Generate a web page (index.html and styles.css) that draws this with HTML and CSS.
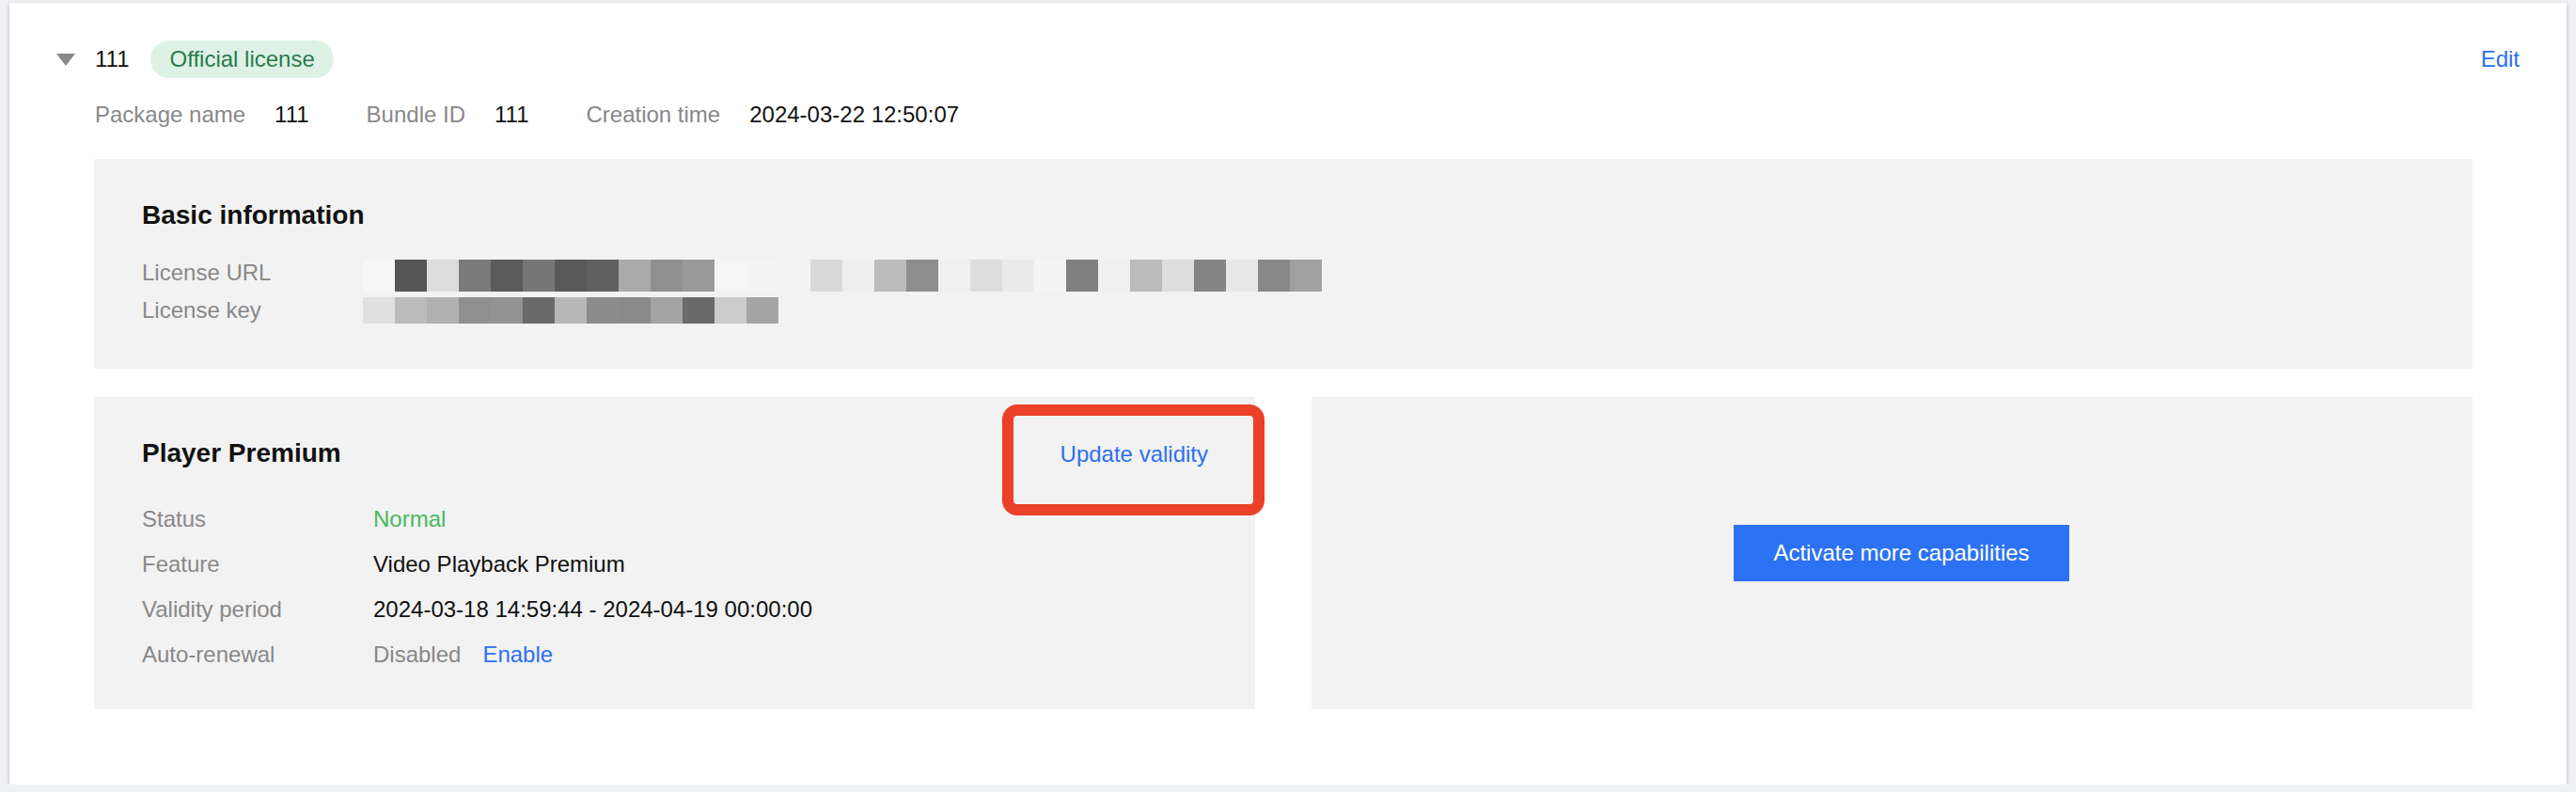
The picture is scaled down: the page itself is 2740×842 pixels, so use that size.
FILE: index.html
```html
<!DOCTYPE html>
<html lang="en">
<head>
    <meta charset="UTF-8">
    <title>License details</title>
    <link rel="stylesheet" href="styles.css">
</head>
<body>
    <div class="card">
        <div class="card-head">
            <div class="title-row">
                <svg class="caret" width="20" height="13" viewBox="0 0 20 13"><polygon points="0,0 20,0 10,13" fill="#888"/></svg>
                <span class="name">111</span>
                <span class="tag">Official license</span>
            </div>
            <a class="link">Edit</a>
        </div>

        <div class="meta">
            <span class="meta-item"><span class="label">Package name</span>111</span>
            <span class="meta-item"><span class="label">Bundle ID</span>111</span>
            <span class="meta-item"><span class="label">Creation time</span>2024-03-22 12:50:07</span>
        </div>

        <div class="content">
            <div class="section basic">
                <h2>Basic information</h2>
                <div class="kv">
                    <span class="label">License URL</span>
                    <div class="mosaic url"></div>
                    <span class="label">License key</span>
                    <div class="mosaic key"></div>
                </div>
            </div>

            <div class="columns">
                <div class="section player">
                    <div class="section-head">
                        <h2>Player Premium</h2>
                        <a class="link update">Update validity</a>
                    </div>
                    <div class="rows">
                        <span class="label">Status</span>
                        <span class="ok">Normal</span>
                        <span class="label">Feature</span>
                        <span>Video Playback Premium</span>
                        <span class="label">Validity period</span>
                        <span>2024-03-18 14:59:44 - 2024-04-19 00:00:00</span>
                        <span class="label">Auto-renewal</span>
                        <span><span class="label">Disabled</span><a class="link enable">Enable</a></span>
                    </div>
                </div>
                <div class="section more">
                    <button class="primary">Activate more capabilities</button>
                </div>
            </div>
        </div>
    </div>
</body>
</html>
```

FILE: styles.css
```css
body {
    margin: 0;
    padding: 3px 10px 0;
    background: #eff1f4;
    font-family: "Liberation Sans", Arial, sans-serif;
    font-size: 24px;
    color: #111;
}
.card {
    background: #fff;
    padding: 40px 50px 80px 50px;
    box-shadow: 0 2px 4px rgba(0, 0, 0, 0.2), 0 0 6px rgba(0, 0, 0, 0.06);
}
.card-head {
    display: flex;
    align-items: center;
    justify-content: space-between;
}
.title-row {
    display: flex;
    align-items: center;
    height: 40px;
}
.caret {
    margin-right: 21px;
}
.name {
    margin-right: 23px;
}
.tag {
    height: 40px;
    line-height: 40px;
    padding: 0 20px;
    border-radius: 20px;
    background: #ddf2e5;
    color: #2b7a4b;
}
.link {
    color: #2d6ff2;
    cursor: pointer;
}
.label {
    color: #888;
}
.meta {
    margin-top: 19px;
    padding-left: 41px;
    line-height: 40px;
    display: flex;
}
.meta-item {
    margin-right: 61px;
}
.meta-item .label {
    margin-right: 31px;
}
.content {
    margin: 27px 50px 0 40px;
}
.section {
    background: #f2f2f2;
}
.section h2 {
    margin: 0;
    font-size: 28px;
    line-height: 40px;
    font-weight: bold;
    color: #111;
}
.basic {
    padding: 40px 50px 42px 51px;
}
.basic h2 {
    margin-bottom: 21px;
}
.kv {
    display: grid;
    grid-template-columns: 235px 1fr;
    line-height: 40px;
}
.mosaic {
    margin-top: 6px;
}
.mosaic.url {
    width: 1020px;
    height: 34px;
    background: linear-gradient(to right,
        #f7f7f7 0 34px, #555 34px 68px, #ddd 68px 102px, #7a7a7a 102px 136px,
        #5a5a5a 136px 170px, #777 170px 204px, #595959 204px 238px, #606060 238px 272px,
        #aaa 272px 306px, #909090 306px 340px, #9a9a9a 340px 374px, #f6f6f6 374px 408px,
        #f4f4f4 408px 442px, #f3f3f3 442px 476px, #d9d9d9 476px 510px, #eee 510px 544px,
        #bbb 544px 578px, #8e8e8e 578px 612px, #f0f0f0 612px 646px, #ddd 646px 680px,
        #eaeaea 680px 714px, #f4f4f4 714px 748px, #808080 748px 782px, #f0f0f0 782px 816px,
        #bbb 816px 850px, #ddd 850px 884px, #858585 884px 918px, #e8e8e8 918px 952px,
        #888 952px 986px, #a0a0a0 986px 1020px);
}
.mosaic.key {
    width: 442px;
    height: 28px;
    background: linear-gradient(to right,
        #e0e0e0 0 34px, #bbb 34px 68px, #b0b0b0 68px 102px, #909090 102px 136px,
        #939393 136px 170px, #6a6a6a 170px 204px, #b8b8b8 204px 238px, #8c8c8c 238px 272px,
        #8a8a8a 272px 306px, #a3a3a3 306px 340px, #6a6a6a 340px 374px, #ccc 374px 408px,
        #a5a5a5 408px 442px);
}
.columns {
    margin-top: 30px;
    display: grid;
    grid-template-columns: 1fr 1fr;
    gap: 60px;
}
.player {
    padding: 40px 50px 34px 51px;
}
.section-head {
    display: flex;
    align-items: baseline;
    justify-content: space-between;
}
.update {
    position: relative;
    display: inline-block;
    line-height: 40px;
}
/* highlight box drawn over the link */
.update::after {
    content: "";
    position: absolute;
    left: -62px;
    right: -60px;
    top: -33px;
    bottom: -45px;
    border: 12px solid #ea4128;
    border-radius: 16px;
}
.rows {
    margin-top: 25px;
    display: grid;
    grid-template-columns: 246px 1fr;
    line-height: 48px;
}
.ok {
    color: #4bb85f;
}
.enable {
    margin-left: 23px;
}
.more {
    display: flex;
    align-items: center;
    justify-content: center;
    padding-left: 20px;
}
.primary {
    height: 60px;
    padding: 0 42px;
    border: none;
    background: #2b72f5;
    color: #fff;
    font-family: inherit;
    font-size: 24px;
    cursor: pointer;
}
```
